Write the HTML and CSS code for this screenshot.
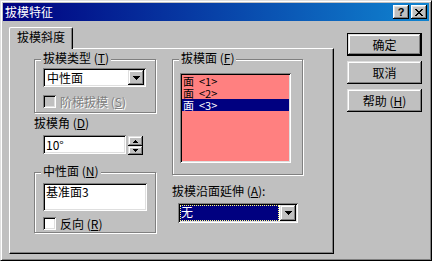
FILE: index.html
```html
<!DOCTYPE html>
<html lang="zh">
<head>
    <meta charset="UTF-8">
    <title>拔模特征</title>
    <link rel="stylesheet" href="styles.css">
</head>
<body>
    <div class="dialog">
        <div class="titlebar">
            <span class="title">拔模特征</span>
            <div class="tb-buttons">
                <span class="tb-btn help">?</span>
                <span class="tb-btn">
                    <svg width="8" height="7" viewBox="0 0 8 7" shape-rendering="crispEdges">
                        <path d="M0 0h2v1h-2zM6 0h2v1h-2zM1 1h2v1h-2zM5 1h2v1h-2zM2 2h4v1h-4zM3 3h2v1h-2zM2 4h4v1h-4zM1 5h2v1h-2zM5 5h2v1h-2zM0 6h2v1h-2zM6 6h2v1h-2z" fill="#000"/>
                    </svg>
                </span>
            </div>
        </div>
        <div class="content">
            <div class="tabs">
                <div class="tab">拔模斜度</div>
                <div class="panel">
                    <div class="col left">
                        <div class="group type">
                            <span class="legend">拔模类型 (<u>T</u>)</span>
                            <div class="combo small">
                                <span class="combo-text">中性面</span>
                                <span class="combo-btn"><svg width="7" height="4" viewBox="0 0 7 4" shape-rendering="crispEdges"><path d="M0 0h7v1h-7zM1 1h5v1h-5zM2 2h3v1h-3zM3 3h1v1h-1z" fill="#000"/></svg></span>
                            </div>
                            <div class="check disabled"><span class="box"></span>阶梯拔模 (<u>S</u>)</div>
                        </div>
                        <div class="label">拔模角 (<u>D</u>)</div>
                        <div class="spin">
                            <div class="field">10°</div>
                            <div class="spin-btns">
                                <span class="spin-btn"><svg width="5" height="3" viewBox="0 0 5 3" shape-rendering="crispEdges"><path d="M2 0h1v1h-1zM1 1h3v1h-3zM0 2h5v1h-5z" fill="#000"/></svg></span>
                                <span class="spin-btn"><svg width="5" height="3" viewBox="0 0 5 3" shape-rendering="crispEdges"><path d="M0 0h5v1h-5zM1 1h3v1h-3zM2 2h1v1h-1z" fill="#000"/></svg></span>
                            </div>
                        </div>
                        <div class="group neutral">
                            <span class="legend">中性面 (<u>N</u>)</span>
                            <div class="textbox">基准面3</div>
                            <div class="check"><span class="box white"></span>反向 (<u>R</u>)</div>
                        </div>
                    </div>
                    <div class="col right">
                        <div class="group faces">
                            <span class="legend">拔模面 (<u>F</u>)</span>
                            <ul class="list">
                                <li>面&nbsp; &lt;1&gt;</li>
                                <li>面&nbsp; &lt;2&gt;</li>
                                <li class="selected">面&nbsp; &lt;3&gt;</li>
                            </ul>
                        </div>
                        <div class="label">拔模沿面延伸 (<u>A</u>):</div>
                        <div class="combo ext">
                            <span class="combo-text"><span class="focus">无</span></span>
                            <span class="combo-btn"><svg width="7" height="4" viewBox="0 0 7 4" shape-rendering="crispEdges"><path d="M0 0h7v1h-7zM1 1h5v1h-5zM2 2h3v1h-3zM3 3h1v1h-1z" fill="#000"/></svg></span>
                        </div>
                    </div>
                </div>
            </div>
            <div class="buttons">
                <div class="btn default">确定</div>
                <div class="btn">取消</div>
                <div class="btn">帮助 (<u>H</u>)</div>
            </div>
        </div>
    </div>
</body>
</html>
```

FILE: styles.css
```css
* {
    box-sizing: border-box;
}
body {
    margin: 0;
    background: #c0c0c0;
    font: 12px/14px "Noto Sans CJK SC", "Liberation Sans", sans-serif;
    color: #000;
}
u {
    text-decoration: underline;
    text-underline-offset: 1px;
}
.dialog {
    width: 432px;
    height: 261px;
    padding: 2px;
    border: 1px solid;
    border-color: #dfdfdf #000 #000 #dfdfdf;
    box-shadow: inset 1px 1px #fff, inset -1px -1px #808080;
    background: #c0c0c0;
    display: flex;
    flex-direction: column;
}
.titlebar {
    height: 18px;
    display: flex;
    align-items: center;
    justify-content: space-between;
    padding: 0 2px 0 2px;
    background: linear-gradient(to right, #000080, #1084d0);
    color: #fff;
}
.tb-buttons {
    display: flex;
    gap: 2px;
}
.tb-btn {
    width: 16px;
    height: 14px;
    display: flex;
    align-items: center;
    justify-content: center;
    background: #c0c0c0;
    box-shadow: inset -1px -1px #000, inset 1px 1px #fff, inset -2px -2px #808080, inset 2px 2px #dfdfdf;
}
.tb-btn.help {
    color: #000;
    font: bold 11px/12px "Liberation Sans", sans-serif;
}
.content {
    display: flex;
    padding: 6px 0 0 6px;
}
.tabs {
    width: 325px;
}
.tab {
    position: relative;
    z-index: 1;
    width: 64px;
    height: 22px;
    margin-bottom: -1px;
    padding: 2px 0 0 7px;
    background: #c0c0c0;
    border: 1px solid;
    border-color: #fff #000 transparent #fff;
    border-bottom: none;
    border-radius: 2px 2px 0 0;
    box-shadow: inset -1px 0 #808080;
}
.panel {
    height: 206px;
    display: flex;
    padding: 10px 0 0 24px;
    border: 1px solid;
    border-color: #fff #000 #000 #fff;
    box-shadow: inset -1px -1px #808080;
}
.col {
    display: flex;
    flex-direction: column;
}
.col.right {
    margin-left: 16px;
}
.group {
    position: relative;
    border: 1px solid #808080;
    box-shadow: inset 1px 1px #fff, 1px 1px #fff;
}
.legend {
    position: absolute;
    top: -9px;
    left: 6px;
    padding: 0 2px;
    background: #c0c0c0;
}
.group.type {
    width: 122px;
    height: 54px;
    padding: 8px 0 0 8px;
}
.group.neutral {
    width: 122px;
    height: 61px;
    margin-top: 17px;
    padding: 10px 0 0 8px;
}
.group.faces {
    width: 131px;
    height: 116px;
    padding: 13px 0 0 7px;
}
.combo,
.field,
.textbox,
.list,
.box {
    box-shadow: inset 1px 1px #808080, inset -1px -1px #fff, inset 2px 2px #000, inset -2px -2px #dfdfdf;
}
.combo {
    display: flex;
    padding: 2px;
    background: #fff;
}
.combo.small {
    width: 103px;
    height: 19px;
}
.combo-text {
    flex: 1;
    padding-left: 2px;
    line-height: 15px;
}
.combo-btn,
.spin-btn,
.btn {
    background: #c0c0c0;
    box-shadow: inset -1px -1px #000, inset 1px 1px #dfdfdf, inset -2px -2px #808080, inset 2px 2px #fff;
}
.combo-btn {
    width: 16px;
    display: flex;
    align-items: center;
    justify-content: center;
}
.combo.ext {
    width: 120px;
    height: 20px;
    margin: 5px 0 0 6px;
}
.combo.ext .combo-text {
    padding: 0 1px 0 0;
}
.focus {
    display: block;
    height: 100%;
    padding-left: 1px;
    background: #000080;
    color: #fff;
    line-height: 14px;
    outline: 1px dotted #ffff80;
    outline-offset: -1px;
}
.check {
    display: flex;
    align-items: center;
    height: 13px;
    margin-top: 8px;
}
.group.neutral .check {
    margin-top: 6px;
}
.box {
    width: 13px;
    height: 13px;
    margin-right: 4px;
    background: #c0c0c0;
}
.box.white {
    background: #fff;
}
.check.disabled {
    color: #808080;
    text-shadow: 1px 1px #fff;
}
.label {
    margin-top: 3px;
}
.col.right .label {
    margin-top: 9px;
}
.spin {
    display: flex;
    margin: 5px 0 0 9px;
}
.field {
    width: 83px;
    height: 19px;
    padding: 2px 3px;
    background: #fff;
    line-height: 15px;
}
.spin-btns {
    display: flex;
    flex-direction: column;
    margin: 1px 0 0 2px;
}
.spin-btn {
    width: 15px;
    height: 10px;
    display: flex;
    align-items: center;
    justify-content: center;
}
.spin-btn + .spin-btn {
    height: 9px;
}
.textbox {
    width: 104px;
    height: 28px;
    padding: 2px 3px;
    background: #fff;
}
.list {
    width: 111px;
    height: 90px;
    margin: 0;
    padding: 2px;
    list-style: none;
    background: #ff8080;
}
.list li {
    height: 12px;
    font-size: 11px;
    line-height: 12px;
    padding-left: 1px;
}
.list li.selected {
    background: #000080;
    color: #fff;
}
.buttons {
    display: flex;
    flex-direction: column;
    gap: 5px;
    width: 75px;
    margin: 6px 0 0 13px;
}
.btn {
    height: 23px;
    display: flex;
    align-items: center;
    justify-content: center;
}
.btn.default {
    border: 1px solid #000;
}
```
